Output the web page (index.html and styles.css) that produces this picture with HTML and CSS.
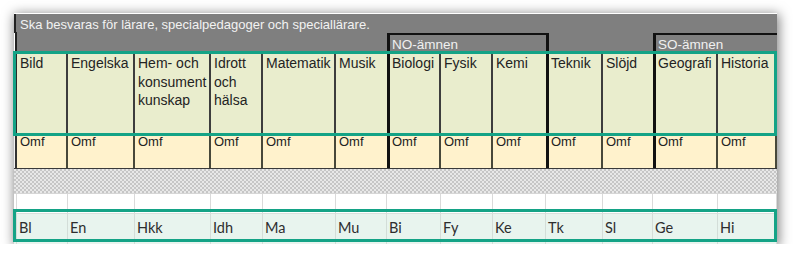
FILE: index.html
```html
<!DOCTYPE html>
<html lang="sv">
<head>
<meta charset="utf-8">
<title>Ämnen</title>
<link rel="stylesheet" href="styles.css">
</head>
<body>
<div class="shot">
  <div class="row r1">
    <div class="a"></div>
    <div class="title">Ska besvaras för lärare, specialpedagoger och speciallärare.</div>
  </div>
  <div class="row r2">
    <div class="a"></div>
    <div class="blank s6"></div>
    <div class="group s3">NO-ämnen</div>
    <div class="gap s2"></div>
    <div class="group s2">SO-ämnen</div>
  </div>
  <div class="row r3">
    <div class="a"></div>
    <div class="h">Bild</div>
    <div class="h">Engelska</div>
    <div class="h">Hem- och<br>konsument<br>kunskap</div>
    <div class="h">Idrott<br>och<br>hälsa</div>
    <div class="h">Matematik</div>
    <div class="h nr">Musik</div>
    <div class="h tl">Biologi</div>
    <div class="h">Fysik</div>
    <div class="h nr">Kemi</div>
    <div class="h tl">Teknik</div>
    <div class="h nr">Slöjd</div>
    <div class="h tl">Geografi</div>
    <div class="h">Historia</div>
  </div>
  <div class="row r4">
    <div class="a"></div>
    <div class="o">Omf</div>
    <div class="o">Omf</div>
    <div class="o">Omf</div>
    <div class="o">Omf</div>
    <div class="o">Omf</div>
    <div class="o nr">Omf</div>
    <div class="o tl">Omf</div>
    <div class="o">Omf</div>
    <div class="o nr">Omf</div>
    <div class="o tl">Omf</div>
    <div class="o nr">Omf</div>
    <div class="o tl">Omf</div>
    <div class="o">Omf</div>
  </div>
  <div class="row r5">
    <div class="pattern"></div>
  </div>
  <div class="row r6">
    <div class="w"></div><div class="w"></div><div class="w"></div><div class="w"></div><div class="w"></div><div class="w"></div><div class="w"></div><div class="w"></div><div class="w"></div><div class="w"></div><div class="w"></div><div class="w"></div><div class="w"></div><div class="w"></div>
  </div>
  <div class="row r7">
    <div class="m"></div>
    <div class="m">Bl</div>
    <div class="m">En</div>
    <div class="m">Hkk</div>
    <div class="m">Idh</div>
    <div class="m">Ma</div>
    <div class="m">Mu</div>
    <div class="m">Bi</div>
    <div class="m">Fy</div>
    <div class="m">Ke</div>
    <div class="m">Tk</div>
    <div class="m">Sl</div>
    <div class="m">Ge</div>
    <div class="m">Hi</div>
  </div>
  <div class="mark mark-top"></div>
  <div class="mark mark-bottom"></div>
</div>
</body>
</html>
```
FILE: styles.css
```css
* { box-sizing: border-box; }
html, body { margin: 0; background: #fff; }
body {
  padding: 13px 0 0 14px;
  font-family: "Liberation Sans", Arial, sans-serif;
}
.shot {
  position: relative;
  width: 763px;
  height: 231px;
  background: #fff;
  box-shadow: 1px 2px 11px 1px rgba(0, 0, 0, 0.5);
}
.row {
  display: grid;
  grid-template-columns: 3px 51px 67px 76px 52px 73px 51px 54px 52px 53px 57px 50px 65px 59px;
}
.s2 { grid-column: span 2; }
.s3 { grid-column: span 3; }
.s6 { grid-column: span 6; }

/* row 1 */
.r1 { height: 20px; background: #7f7f7f; border-top: 1px solid #fff; }
.r1 .a { border-left: 2px solid #222; border-bottom: 1px solid #222; }
.title {
  grid-column: span 13;
  color: #f2f2f2;
  font-size: 13px;
  line-height: 17px;
  padding: 2px 0 0 3px;
  white-space: nowrap;
}

/* row 2 */
.r2 { height: 18px; background: #7f7f7f; }
.r2 .a { background: #fff; border-right: 2px solid #222; }
.group {
  border-top: 2px solid #111;
  border-left: 3px solid #111;
  color: #f0f0f0;
  font-size: 13.5px;
  line-height: 16px;
  padding: 2px 0 0 2px;
  white-space: nowrap;
}
.gap { border-left: 3px solid #111; }

/* header row */
.r3 { height: 82px; background: #e9edcd; }
.r3 .a { border-right: 2px solid #2a2a2a; }
.h {
  border-right: 2px solid #3d3d3d;
  color: #232323;
  font-size: 14px;
  line-height: 18.5px;
  padding: 3px 0 0 3px;
  white-space: nowrap;
}

/* Omf row */
.r4 { height: 36px; background: #fff2cc; border-bottom: 1px solid #3a3a3a; }
.r4 .a { background: #f2f2f2; border-right: 2px solid #333; }
.o {
  border-right: 2px solid #48483a;
  color: #222;
  font-size: 13px;
  line-height: 15px;
  padding: 1px 0 0 3px;
}
.nr { border-right: none; }
.tl { border-left: 3px solid #111; padding-left: 2px; }

/* pattern row */
.r5 { height: 25px; }
.pattern {
  grid-column: 1 / -1;
  background: repeating-conic-gradient(#c6c6c6 0 25%, #e8e8e8 0 50%) 0 0 / 4px 4px;
  border-bottom: 1px solid #d6d6d6;
}

/* white row */
.r6 { height: 20px; background: #fff; }
.w { border-right: 1px solid #dadada; border-bottom: 1px solid #d8e0dc; }

/* mint row */
.r7 { height: 30px; background: #e8f4ee; }
.m {
  border-right: 1px solid #d3ddd8;
  color: #2e2e2e;
  font-family: Lato, "Liberation Sans", sans-serif;
  font-size: 14.5px;
  line-height: 16px;
  padding: 6px 0 0 2px;
}

/* teal highlight rectangles drawn over the sheet */
.mark {
  position: absolute;
  left: -1px;
  width: 764px;
  border: 3px solid #14a386;
}
.mark-top { top: 38px; height: 85px; }
.mark-bottom { top: 196px; height: 33px; }
```
